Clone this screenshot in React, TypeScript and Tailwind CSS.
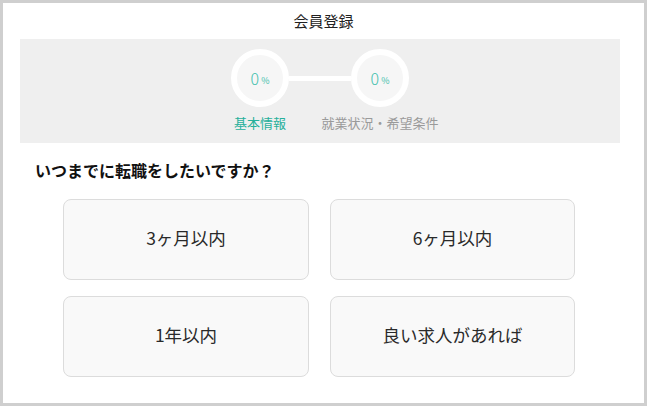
import React from "react";

const font = { fontFamily: '"Noto Sans CJK JP", "Noto Sans", sans-serif' };

function Step({ label, active }: { label: string; active: boolean }) {
  return (
    <div className={`w-[120px] text-center text-[13px] leading-[18px] ${active ? "text-[#26b09b]" : "text-[#9a9a9a]"}`}>
      {label}
    </div>
  );
}

function Circle() {
  return (
    <div className="w-[58px] h-[58px] rounded-full border-[6px] border-white bg-[#f6f6f6] flex items-center justify-center">
      <span className="text-[#3fbfac] text-[16px] leading-none font-light">0</span>
      <span className="text-[#3fbfac] text-[9px] leading-none ml-[2px] mt-[4px]">%</span>
    </div>
  );
}

const options = ["3ヶ月以内", "6ヶ月以内", "1年以内", "良い求人があれば"];

export default function App() {
  return (
    <div className="w-[648px] h-[408px] bg-white" style={font}>
      <div className="w-[647px] h-[406px] border-[3px] border-[#cfcfcf] flex flex-col">
        <div className="h-[36px] flex items-center justify-center text-[15px] text-[#222] pt-[1px]">会員登録</div>
        <div className="ml-[17px] w-[600px] h-[104px] bg-[#efefef] flex flex-col items-center pt-[10px]">
          <div className="flex items-center">
            <Circle />
            <div className="w-[62px] h-[5px] bg-white" />
            <Circle />
          </div>
          <div className="flex mt-[7px]">
            <Step label="基本情報" active />
            <Step label="就業状況・希望条件" active={false} />
          </div>
        </div>
        <div className="ml-[32px] mt-[16px] text-[16px] leading-[22px] font-bold text-[#111]">いつまでに転職をしたいですか？</div>
        <div className="ml-[60px] mt-[18px] grid grid-cols-[246px_245px] gap-x-[21px] gap-y-[16px]">
          {options.map((o) => (
            <div
              key={o}
              className="h-[81px] rounded-[8px] border border-[#dcdcdc] bg-[#f9f9f9] flex items-center justify-center text-[17.5px] text-[#2a2a2a] pb-[2px]"
            >
              {o}
            </div>
          ))}
        </div>
      </div>
    </div>
  );
}
